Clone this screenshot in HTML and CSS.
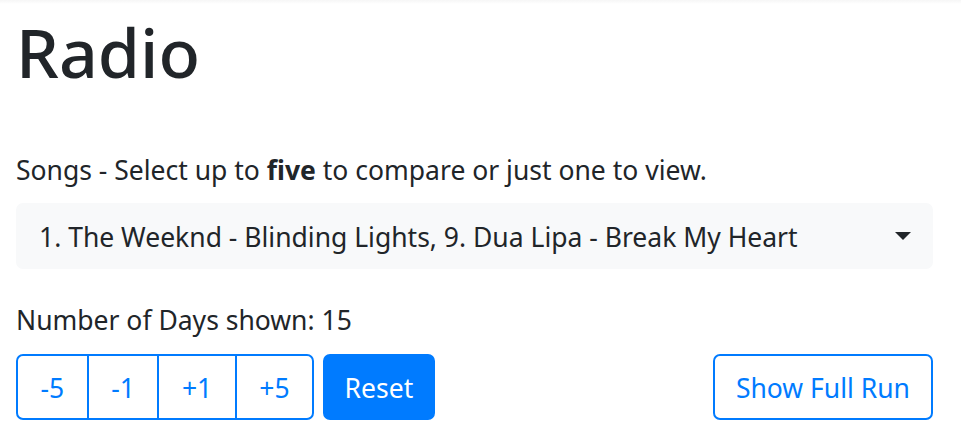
FILE: index.html
```html
<!DOCTYPE html>
<html lang="en">
<head>
<meta charset="UTF-8" />
<meta name="viewport" content="width=device-width, initial-scale=1" />
<title>Radio</title>
<link rel="stylesheet" href="styles.css">
</head>
<body>

<div class="top-shadow"></div>

<div class="main-container">
  <h1 class="page-title">Radio</h1>

  <label class="field-label" for="song-select">Songs - Select up to <b>five</b> to compare or just one to view.</label>
  <button type="button" id="song-select" class="song-select">
    <span class="song-select-text">1. The Weeknd - Blinding Lights, 9. Dua Lipa - Break My Heart</span>
    <span class="caret"></span>
  </button>

  <p class="field-label days-label">Number of Days shown: <span id="days-count">15</span></p>

  <div class="controls">
    <div class="left-controls">
      <div class="btn-group">
        <button type="button" class="btn btn-outline">-5</button>
        <button type="button" class="btn btn-outline">-1</button>
        <button type="button" class="btn btn-outline">+1</button>
        <button type="button" class="btn btn-outline">+5</button>
      </div>
      <button type="button" class="btn btn-primary">Reset</button>
    </div>
    <button type="button" class="btn btn-outline btn-solo">Show Full Run</button>
  </div>
</div>

</body>
</html>
```

FILE: styles.css
```css
body {
  margin: 0;
  font-family: "Noto Sans", "Open Sans", sans-serif;
  font-size: 26.5px;
  line-height: 42px;
  color: #212529;
  background-color: #fff;
}
.top-shadow {
  height: 4px;
  background: linear-gradient(#f6f6f6, #fff);
}
.main-container {
  width: 917px;
  margin-left: 16px;
}
.page-title {
  margin: 6px 0 0;
  font-size: 68px;
  line-height: 84px;
  font-weight: 500;
}
.field-label {
  display: block;
  margin: 0;
}
.field-label b {
  font-weight: 700;
}
label.field-label {
  margin-top: 55px;
}
.song-select {
  display: flex;
  align-items: center;
  justify-content: space-between;
  width: 100%;
  height: 66px;
  margin-top: 12px;
  padding: 2px 22px 0 23px;
  border: none;
  border-radius: 7px;
  background-color: #f8f9fa;
  font-family: inherit;
  font-size: 26.5px;
  color: #212529;
  text-align: left;
  cursor: pointer;
}
.caret {
  width: 0;
  height: 0;
  margin-top: -2px;
  border-top: 8px solid #212529;
  border-left: 8.5px solid transparent;
  border-right: 8.5px solid transparent;
}
.days-label {
  margin-top: 30px;
}
.controls {
  display: flex;
  justify-content: space-between;
  margin-top: 13px;
}
.left-controls {
  display: flex;
  gap: 9px;
}
.btn-group {
  display: flex;
}
.btn {
  height: 66px;
  padding: 2px 21px 0;
  border: 2px solid #007bff;
  border-radius: 7px;
  font-family: inherit;
  font-size: 26.5px;
  line-height: 1;
  cursor: pointer;
}
.btn-outline {
  background-color: #fff;
  color: #007bff;
}
.btn-primary {
  padding: 2px 19.5px 0;
  background-color: #007bff;
  color: #fff;
}
.btn-group .btn {
  padding: 2px 22.5px 0;
  border-radius: 0;
}
.btn-group .btn + .btn {
  margin-left: -2px;
}
.btn-group .btn:first-child {
  border-radius: 7px 0 0 7px;
}
.btn-group .btn:last-child {
  border-radius: 0 7px 7px 0;
}
```
